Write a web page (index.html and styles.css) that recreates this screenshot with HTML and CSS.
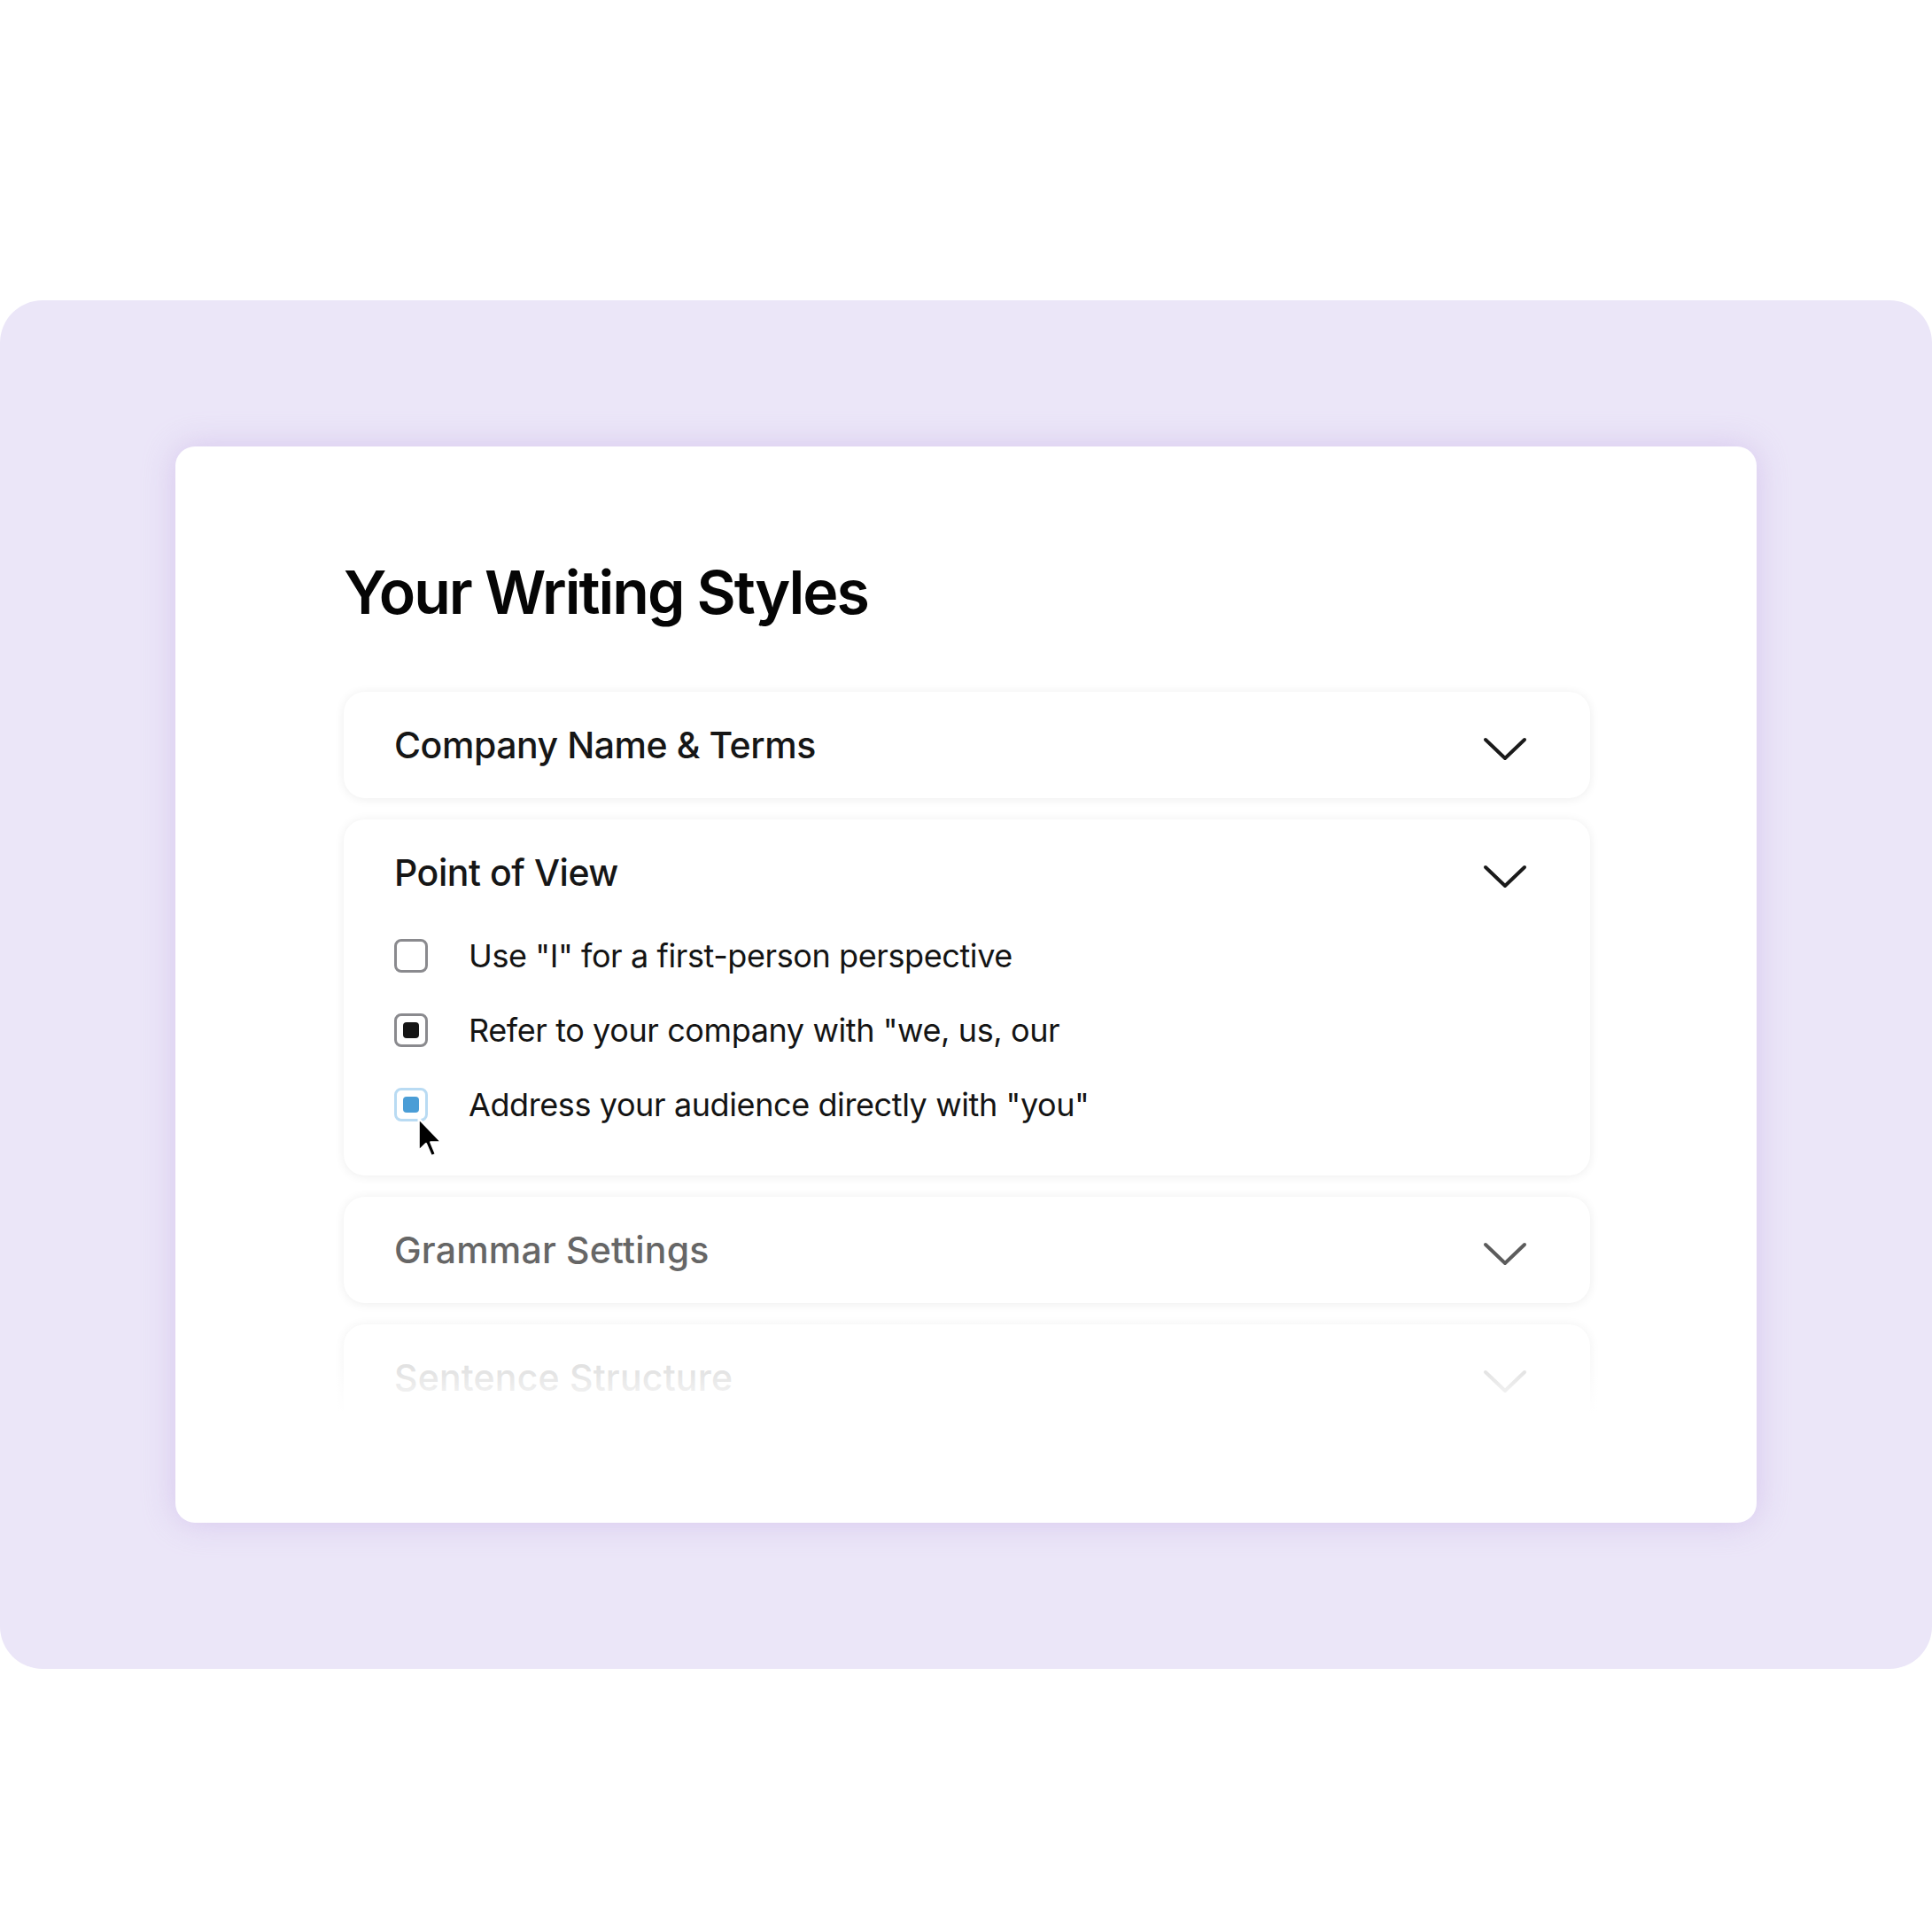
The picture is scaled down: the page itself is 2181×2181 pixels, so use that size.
FILE: index.html
```html
<!DOCTYPE html>
<html lang="en">

<head>
    <meta charset="UTF-8">
    <meta name="viewport" content="width=device-width, initial-scale=1.0">
    <title>Your Writing Styles</title>
    <link rel="stylesheet" href="styles.css">
</head>

<body>
    <div id="panel">
        <div id="card">
            <h1 id="title">Your Writing Styles</h1>

            <div id="accordion">
                <div class="acc-item">
                    <div class="acc-head">
                        <span>Company Name &amp; Terms</span>
                        <svg class="chevron" width="48" height="25" viewBox="0 0 48 25"><path d="M2 2 L24 23 L46 2" /></svg>
                    </div>
                </div>

                <div class="acc-item open">
                    <div class="acc-head">
                        <span>Point of View</span>
                        <svg class="chevron" width="48" height="25" viewBox="0 0 48 25"><path d="M2 2 L24 23 L46 2" /></svg>
                    </div>
                    <ul class="options">
                        <li class="option">
                            <span class="check"></span>
                            <span>Use "I" for a first-person perspective</span>
                        </li>
                        <li class="option">
                            <span class="check checked"></span>
                            <span>Refer to your company with "we, us, our</span>
                        </li>
                        <li class="option">
                            <span class="check hover">
                                <svg class="cursor" width="30" height="46" viewBox="0 0 13 20">
                                    <path d="M0.7 0.7 L0.7 16.6 L4.3 13.1 L6.9 19.2 L9.1 18.3 L6.6 12.3 L11.8 12.3 Z" />
                                </svg>
                            </span>
                            <span>Address your audience directly with "you"</span>
                        </li>
                    </ul>
                </div>

                <div class="acc-item muted">
                    <div class="acc-head">
                        <span>Grammar Settings</span>
                        <svg class="chevron" width="48" height="25" viewBox="0 0 48 25"><path d="M2 2 L24 23 L46 2" /></svg>
                    </div>
                </div>

                <div class="acc-item faded">
                    <div class="acc-head">
                        <span>Sentence Structure</span>
                        <svg class="chevron" width="48" height="25" viewBox="0 0 48 25"><path d="M2 2 L24 23 L46 2" /></svg>
                    </div>
                </div>
            </div>
        </div>
    </div>
</body>

</html>
```

FILE: styles.css
```css
body {
    font-family: 'Inter', 'Noto Sans', sans-serif;
    margin: 0;
    background-color: #ffffff;
    color: #111111;
}

#panel {
    margin-top: 339px;
    height: 1545px;
    box-sizing: border-box;
    padding: 165px 198px;
    background-color: #ebe6f8;
    border-radius: 48px;
}

#card {
    height: 100%;
    box-sizing: border-box;
    padding: 130px 188px 0 190px;
    background-color: #ffffff;
    border-radius: 22px;
    box-shadow: 0 0 36px rgba(190, 160, 225, 0.45);
    overflow: hidden;
}

#title {
    margin: 0;
    font-size: 68px;
    line-height: 1;
    font-weight: 600;
    letter-spacing: -2px;
    color: #050505;
}

#accordion {
    margin-top: 79px;
    display: flex;
    flex-direction: column;
    gap: 24px;
}

.acc-item {
    position: relative;
    background-color: #ffffff;
    border-radius: 24px;
    box-shadow: 0 1px 12px rgba(0, 0, 0, 0.075);
}

.acc-head {
    height: 120px;
    display: flex;
    align-items: center;
    justify-content: space-between;
    padding: 0 72px 0 57px;
    font-size: 41px;
    font-weight: 500;
    letter-spacing: -0.45px;
    color: #161616;
}

.chevron {
    margin-top: 8px;
    overflow: visible;
}

.chevron path {
    fill: none;
    stroke: #1a1a1a;
    stroke-width: 4;
    stroke-linecap: round;
    stroke-linejoin: round;
}

.options {
    list-style: none;
    margin: 0;
    padding: 4px 57px 50px;
    display: flex;
    flex-direction: column;
    gap: 24px;
}

.option {
    height: 60px;
    display: flex;
    align-items: center;
    gap: 46px;
    font-size: 36px;
    letter-spacing: -0.4px;
    color: #141414;
}

.check {
    position: relative;
    width: 38px;
    height: 38px;
    box-sizing: border-box;
    border: 3px solid #8a8a8e;
    border-radius: 8px;
    display: flex;
    align-items: center;
    justify-content: center;
    flex-shrink: 0;
}

.check.checked::after,
.check.hover::after {
    content: "";
    width: 18px;
    height: 18px;
    border-radius: 4px;
    background-color: #151515;
}

.check.hover {
    border-color: #b9dbf3;
}

.check.hover::after {
    background-color: #4a9dd6;
}

.cursor {
    position: absolute;
    left: 23px;
    top: 30px;
    z-index: 2;
}

.cursor path {
    fill: #000000;
    stroke: #ffffff;
    stroke-width: 1;
    stroke-linejoin: round;
}

.muted .acc-head {
    color: #666666;
    letter-spacing: 0.2px;
}

.muted .chevron path {
    stroke: #5c5c5c;
}

.faded .acc-head {
    color: #cfcfcf;
    letter-spacing: 0.2px;
}

.faded .chevron path {
    stroke: #cfcfcf;
}

/* fade the last item out into the card */
.faded::after {
    content: "";
    position: absolute;
    left: -30px;
    right: -30px;
    top: -4px;
    bottom: -40px;
    background: linear-gradient(to bottom, rgba(255, 255, 255, 0.1) 0px, rgba(255, 255, 255, 0.45) 60px, #ffffff 105px);
}
```
